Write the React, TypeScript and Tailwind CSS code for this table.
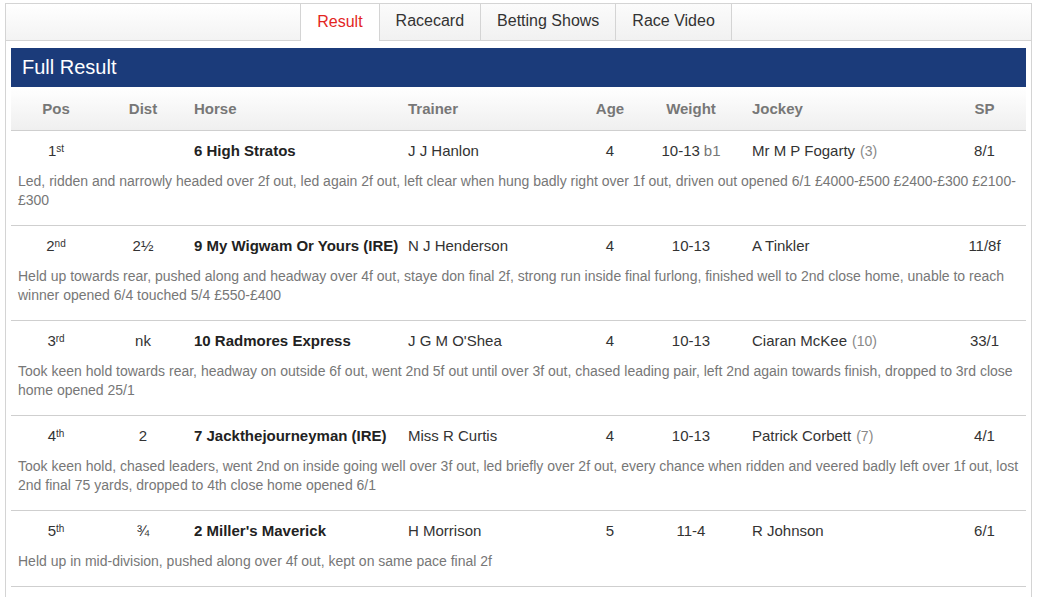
import React from 'react';

type Runner = {
    pos: string;
    suffix: string;
    dist: string;
    horse: string;
    trainer: string;
    age: string;
    weight: string;
    headgear?: string;
    jockey: string;
    claim?: string;
    sp: string;
    comment: string;
};

const runners: Runner[] = [
    {
        pos: '1', suffix: 'st', dist: '', horse: '6 High Stratos', trainer: 'J J Hanlon', age: '4',
        weight: '10-13', headgear: 'b1', jockey: 'Mr M P Fogarty', claim: '(3)', sp: '8/1',
        comment: 'Led, ridden and narrowly headed over 2f out, led again 2f out, left clear when hung badly right over 1f out, driven out opened 6/1 £4000-£500 £2400-£300 £2100-£300',
    },
    {
        pos: '2', suffix: 'nd', dist: '2½', horse: '9 My Wigwam Or Yours (IRE)', trainer: 'N J Henderson', age: '4',
        weight: '10-13', jockey: 'A Tinkler', sp: '11/8f',
        comment: 'Held up towards rear, pushed along and headway over 4f out, staye don final 2f, strong run inside final furlong, finished well to 2nd close home, unable to reach winner opened 6/4 touched 5/4 £550-£400',
    },
    {
        pos: '3', suffix: 'rd', dist: 'nk', horse: '10 Radmores Express', trainer: "J G M O'Shea", age: '4',
        weight: '10-13', jockey: 'Ciaran McKee', claim: '(10)', sp: '33/1',
        comment: 'Took keen hold towards rear, headway on outside 6f out, went 2nd 5f out until over 3f out, chased leading pair, left 2nd again towards finish, dropped to 3rd close home opened 25/1',
    },
    {
        pos: '4', suffix: 'th', dist: '2', horse: '7 Jackthejourneyman (IRE)', trainer: 'Miss R Curtis', age: '4',
        weight: '10-13', jockey: 'Patrick Corbett', claim: '(7)', sp: '4/1',
        comment: 'Took keen hold, chased leaders, went 2nd on inside going well over 3f out, led briefly over 2f out, every chance when ridden and veered badly left over 1f out, lost 2nd final 75 yards, dropped to 4th close home opened 6/1',
    },
    {
        pos: '5', suffix: 'th', dist: '¾', horse: "2 Miller's Maverick", trainer: 'H Morrison', age: '5',
        weight: '11-4', jockey: 'R Johnson', sp: '6/1',
        comment: 'Held up in mid-division, pushed along over 4f out, kept on same pace final 2f',
    },
];

const tabs = ['Result', 'Racecard', 'Betting Shows', 'Race Video'];

const cols = 'grid grid-cols-[90px_84px_213px_172px_80px_82px_211px_83px]';

export default function App() {
    return (
        <div className="bg-white min-h-[597px] pt-[3px] font-['Liberation_Sans',Arial,sans-serif]">
            <div className="ml-[5px] w-[1027px] border border-[#d4d4d4] border-b-0 min-h-[594px]">
                {/* Tabs */}
                <div className="flex justify-center pr-[5px] h-[37px] bg-gradient-to-b from-white to-[#f3f3f3] border-b border-[#d4d4d4]">
                    {tabs.map((tab, i) => (
                        <div
                            key={tab}
                            className={`px-[16px] pb-[2px] flex items-center text-[16px] border-r border-[#d4d4d4] ${
                                i === 0
                                    ? 'bg-white text-[#e3261f] border-l h-[37px] -mb-px'
                                    : 'h-[36px] bg-gradient-to-b from-[#fbfbfb] to-[#f1f1f1] text-[#333]'
                            }`}
                        >
                            {tab}
                        </div>
                    ))}
                </div>

                {/* Content */}
                <div className="px-[5px] pt-[7px]">
                    <div className="h-[39px] bg-[#1b3b7a] text-white text-[20px] flex items-center px-[11px] pb-px">
                        Full Result
                    </div>

                    {/* Header row */}
                    <div className={`${cols} h-[44px] pt-[2px] items-center bg-gradient-to-b from-white to-[#efefef] border-b border-[#cfcfcf] text-[15px] font-bold text-[#777]`}>
                        <div className="text-center">Pos</div>
                        <div className="text-center">Dist</div>
                        <div className="pl-[9px]">Horse</div>
                        <div className="pl-[10px]">Trainer</div>
                        <div className="text-center">Age</div>
                        <div className="text-center">Weight</div>
                        <div className="pl-[20px]">Jockey</div>
                        <div className="text-center">SP</div>
                    </div>

                    {runners.map((r) => (
                        <div key={r.pos} className="border-b border-[#cfcfcf] pt-[9px] pb-[15px]">
                            <div className={`${cols} h-[20px] items-center text-[15px] text-[#333]`}>
                                <div className="text-center">
                                    {r.pos}
                                    <sup className="text-[10px] relative -top-[4px]">{r.suffix}</sup>
                                </div>
                                <div className="text-center">{r.dist}</div>
                                <div className="pl-[9px] font-bold text-[#222] whitespace-nowrap">{r.horse}</div>
                                <div className="pl-[10px] whitespace-nowrap">{r.trainer}</div>
                                <div className="text-center">{r.age}</div>
                                <div className="text-center whitespace-nowrap">
                                    {r.weight}
                                    {r.headgear && <span className="text-[#777] ml-1">{r.headgear}</span>}
                                </div>
                                <div className="pl-[20px] whitespace-nowrap">
                                    {r.jockey}
                                    {r.claim && <span className="text-[#888] text-[14px] ml-[5px]">{r.claim}</span>}
                                </div>
                                <div className="text-center">{r.sp}</div>
                            </div>
                            <p className="mt-[12px] px-[7px] text-[14px] leading-[19px] text-[#777]">{r.comment}</p>
                        </div>
                    ))}
                </div>
            </div>
        </div>
    );
}
